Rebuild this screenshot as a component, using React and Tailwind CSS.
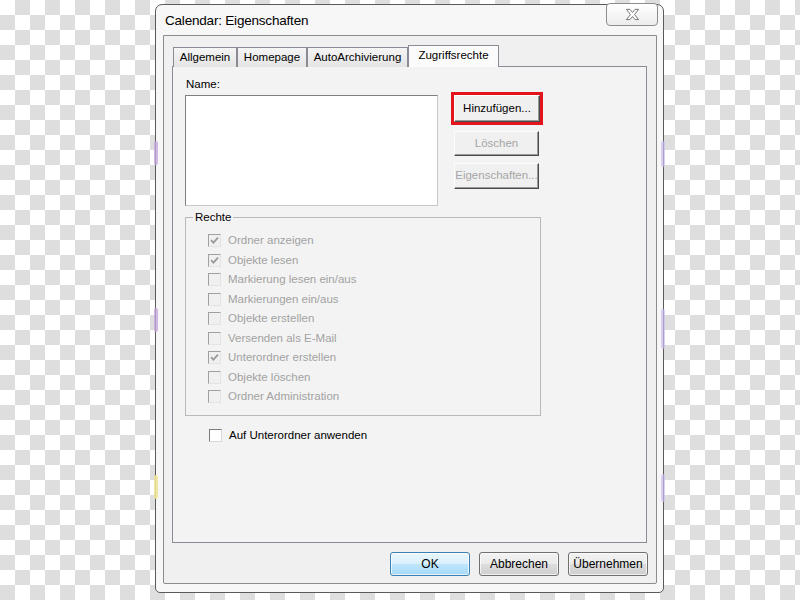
import { useState } from 'react';

const rechte = [
  { id: 'anzeigen', label: 'Ordner anzeigen', checked: true },
  { id: 'lesen', label: 'Objekte lesen', checked: true },
  { id: 'markLesen', label: 'Markierung lesen ein/aus', checked: false },
  { id: 'mark', label: 'Markierungen ein/aus', checked: false },
  { id: 'erstellen', label: 'Objekte erstellen', checked: false },
  { id: 'mail', label: 'Versenden als E-Mail', checked: false },
  { id: 'unterordner', label: 'Unterordner erstellen', checked: true },
  { id: 'loeschen', label: 'Objekte löschen', checked: false },
  { id: 'admin', label: 'Ordner Administration', checked: false },
];

const tabs = [
  { id: 'allgemein', label: 'Allgemein', w: 'w-[64px]' },
  { id: 'homepage', label: 'Homepage', w: 'w-[70px]' },
  { id: 'auto', label: 'AutoArchivierung', w: 'w-[101px]' },
  { id: 'zugriff', label: 'Zugriffsrechte', w: 'w-[91px]' },
];

function CheckBox({ checked, disabled }) {
  return (
    <span
      className={`flex h-[13px] w-[13px] shrink-0 items-center justify-center border ${
        disabled
          ? 'border-t-[#a0a0a0] border-l-[#a0a0a0] border-r-[#e3e3e3] border-b-[#e3e3e3] bg-[#f0f0f0]'
          : 'border-t-[#7a7a7a] border-l-[#7a7a7a] border-r-[#d8d8d8] border-b-[#d8d8d8] bg-white'
      }`}
    >
      {checked && (
        <svg width="9" height="9" viewBox="0 0 9 9">
          <path d="M1 4.2 L3.4 6.6 L8 1.6" fill="none" stroke={disabled ? '#9a9a9a' : '#222'} strokeWidth="1.8" />
        </svg>
      )}
    </span>
  );
}

function ClassicButton({ children, disabled, className = '' }) {
  return (
    <div
      className={`flex items-center justify-center overflow-hidden whitespace-nowrap border border-t-[#fdfdfd] border-l-[#fdfdfd] border-r-[#4a4a4a] border-b-[#4a4a4a] bg-[#f0f0f0] shadow-[inset_-1px_-1px_0_#9a9a9a] ${
        disabled ? 'text-[#a6a6a6]' : 'text-black'
      } ${className}`}
    >
      {children}
    </div>
  );
}

function AeroButton({ children, primary }) {
  return (
    <div
      className={`flex h-[24px] w-[80px] items-center justify-center rounded-[3px] border shadow-[inset_0_0_0_1px_rgba(255,255,255,0.7)] ${
        primary
          ? 'border-[#3c7fb1] bg-[linear-gradient(#eaf6fd_0%,#d9f0fc_50%,#bee6fd_51%,#a7d9f5_100%)]'
          : 'border-[#707070] bg-[linear-gradient(#f2f2f2_0%,#ebebeb_50%,#dddddd_51%,#cfcfcf_100%)]'
      }`}
    >
      {children}
    </div>
  );
}

export default function App() {
  const [activeTab] = useState('zugriff');

  return (
    <div className="relative h-[600px] w-[800px] overflow-hidden bg-white bg-[image:conic-gradient(#dedede_25%,#ffffff_0_50%,#dedede_0_75%,#ffffff_0)] bg-[length:30px_30px] pl-[155px] pt-[4px] font-['Liberation_Sans',Arial,sans-serif] text-black">
      {/* Fenster */}
      <div className="relative flex h-[589px] w-[509px] flex-col rounded-t-[7px] rounded-b-[5px] border border-[#5a5a5a] bg-[#f7f7f7] pb-[8px] pl-[7px] pr-[6px]">
        <div className="flex h-[30px] shrink-0 items-center pl-[2px] pt-[2px] text-[13.5px] tracking-[-0.2px]">
          Calendar: Eigenschaften
        </div>

        <div className="absolute right-[5px] top-[-2px] flex h-[23px] w-[52px] items-center justify-center rounded-[4px] border border-[#8d8d8d] bg-[linear-gradient(#ffffff,#ececec)]">
          <svg width="15" height="13" viewBox="0 0 16 14">
            <path
              d="M1.5 1.5 L5.2 1.5 L8 4.8 L10.8 1.5 L14.5 1.5 L10.2 7 L14.5 12.5 L10.8 12.5 L8 9.2 L5.2 12.5 L1.5 12.5 L5.8 7 Z"
              fill="#ffffff"
              stroke="#6a6a6a"
              strokeWidth="1"
              strokeLinejoin="round"
            />
          </svg>
        </div>

        {/* Client-Bereich */}
        <div className="flex flex-1 flex-col rounded-b-[2px] border border-[#8c8c8c] bg-[#f0f0f0] pb-[6px]">
          {/* Tabs */}
          <div className="relative z-10 -mb-px flex items-end pl-[9px] pt-[9px]">
            {tabs.map((tab) => {
              const active = tab.id === activeTab;
              return (
                <div
                  key={tab.id}
                  className={`flex items-center justify-center border border-b-0 border-[#898c95] text-[11.5px] ${tab.w} ${
                    active ? 'h-[22px] bg-[#fbfbfb] pb-[1px]' : 'h-[20px] bg-[linear-gradient(#f5f5f5,#e4e4e4)] border-b border-b-[#898c95]'
                  }`}
                >
                  {tab.label}
                </div>
              );
            })}
          </div>

          {/* Registerseite */}
          <div className="ml-[8px] h-[477px] w-[475px] border border-[#898c95] bg-[#f3f3f3] pl-[12px] pt-[9px] text-[11.5px]">
            <div className="flex items-start">
              <div className="flex w-[253px] flex-col">
                <div className="h-[16px] pl-[1px] leading-[16px]">Name:</div>
                <div className="mt-[3px] h-[111px] border border-t-[#7f7f7f] border-l-[#7f7f7f] border-r-[#c8c8c8] border-b-[#c8c8c8] bg-white" />
              </div>
              <div className="ml-[13px] mt-[16px] flex flex-col">
                <div className="border-[3px] border-[#e3141b]">
                  <ClassicButton className="h-[27px] w-[86px]">Hinzufügen...</ClassicButton>
                </div>
                <ClassicButton disabled className="ml-[3px] mt-[6px] h-[25px] w-[85px]">
                  Löschen
                </ClassicButton>
                <ClassicButton disabled className="ml-[3px] mt-[7px] h-[26px] w-[85px]">
                  Eigenschaften...
                </ClassicButton>
              </div>
            </div>

            <fieldset className="mt-[3px] h-[207px] w-[356px] border border-[#b9b9b9] p-0">
              <legend className="ml-[7px] px-[2px] leading-[16px]">Rechte</legend>
              <div className="flex flex-col pl-[22px] pt-[6px]">
                {rechte.map((r) => (
                  <div key={r.id} className="flex h-[19.5px] items-center gap-[7px] text-[#a2a2a2]">
                    <CheckBox checked={r.checked} disabled />
                    <span>{r.label}</span>
                  </div>
                ))}
              </div>
            </fieldset>

            <div className="ml-[24px] mt-[10px] flex h-[19.5px] items-center gap-[7px]">
              <CheckBox checked={false} />
              <span>Auf Unterordner anwenden</span>
            </div>
          </div>

          {/* Dialogschaltflächen */}
          <div className="mt-[9px] flex justify-end gap-[9px] pr-[8px] text-[12px]">
            <AeroButton primary>OK</AeroButton>
            <AeroButton>Abbrechen</AeroButton>
            <AeroButton>Übernehmen</AeroButton>
          </div>
        </div>

        {/* Farbspuren am Rahmen */}
        <div className="absolute left-[-2px] top-[136px] h-[24px] w-[4px] rounded-full bg-[#c4a8dc] opacity-80" />
        <div className="absolute left-[-2px] top-[303px] h-[24px] w-[4px] rounded-full bg-[#c4a8dc] opacity-80" />
        <div className="absolute left-[-2px] top-[470px] h-[24px] w-[4px] rounded-full bg-[#efe49a] opacity-90" />
        <div className="absolute right-[-2px] top-[136px] h-[26px] w-[4px] rounded-full bg-[#cdbdf0] opacity-70" />
        <div className="absolute right-[-2px] top-[304px] h-[40px] w-[4px] rounded-full bg-[#cdbdf0] opacity-70" />
        <div className="absolute right-[-2px] top-[469px] h-[28px] w-[4px] rounded-full bg-[#cdbdf0] opacity-70" />
      </div>
    </div>
  );
}
